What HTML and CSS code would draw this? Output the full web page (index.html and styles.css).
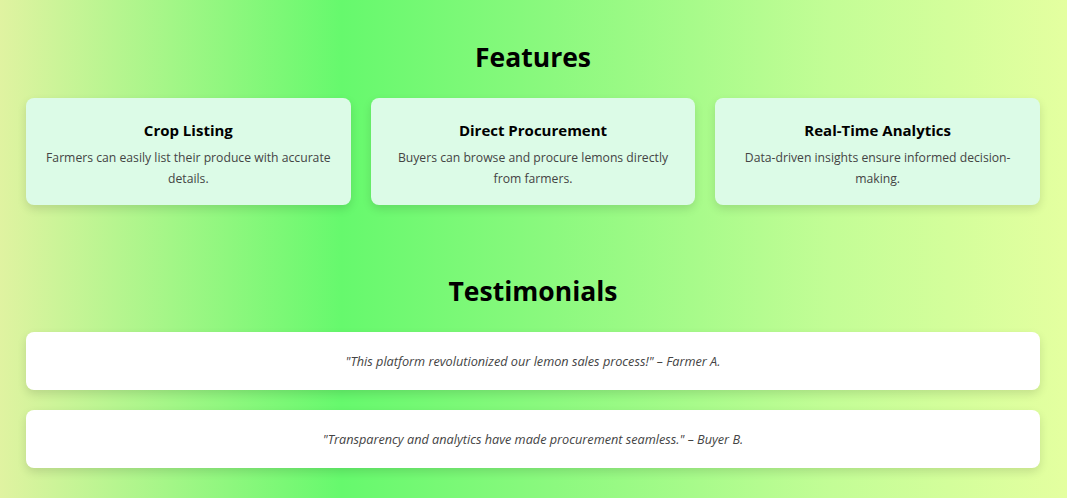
FILE: index.html
```html
<!DOCTYPE html>
<html lang="en">
<head>
<meta charset="utf-8">
<title>Lemon Platform</title>
<link rel="stylesheet" href="styles.css">
</head>
<body>
<section class="section features">
  <h2 class="section-title">Features</h2>
  <div class="feature-grid">
    <div class="feature-card">
      <h3 class="feature-title">Crop Listing</h3>
      <p class="feature-text">Farmers can easily list their produce with accurate details.</p>
    </div>
    <div class="feature-card">
      <h3 class="feature-title">Direct Procurement</h3>
      <p class="feature-text">Buyers can browse and procure lemons directly from farmers.</p>
    </div>
    <div class="feature-card">
      <h3 class="feature-title">Real-Time Analytics</h3>
      <p class="feature-text">Data-driven insights ensure informed decision-making.</p>
    </div>
  </div>
</section>
<section class="section testimonials">
  <h2 class="section-title">Testimonials</h2>
  <div class="testimonial-list">
    <div class="testimonial-card">
      <p class="testimonial-text">"This platform revolutionized our lemon sales process!" – Farmer A.</p>
    </div>
    <div class="testimonial-card">
      <p class="testimonial-text">"Transparency and analytics have made procurement seamless." – Buyer B.</p>
    </div>
  </div>
</section>
</body>
</html>
```
FILE: styles.css
```css
html, body {
  margin: 0;
  padding: 0;
}
body {
  min-height: 100vh;
  font-family: "Open Sans", "Noto Sans", sans-serif;
  background: linear-gradient(90deg, #e0f3a1 0%, #66f96d 32%, #8cf97f 52%, #c3fd96 78%, #e4ffa0 100%);
  color: #000;
}
.section {
  padding: 0 27px 0 26px;
}
.features {
  padding-top: 38px;
}
.testimonials {
  padding-top: 67px;
  padding-bottom: 30px;
}
.section-title {
  margin: 0 0 22px;
  text-align: center;
  font-size: 26.5px;
  font-weight: 700;
  line-height: 38px;
}
.feature-grid {
  display: grid;
  grid-template-columns: repeat(3, 1fr);
  gap: 20px;
}
.feature-card {
  background: #dcfbe7;
  border-radius: 8px;
  box-shadow: 0 4px 10px rgba(0, 0, 0, 0.12);
  padding: 22px 16px 16px;
  text-align: center;
}
.feature-title {
  margin: 0 0 7px;
  font-size: 15px;
  font-weight: 700;
  line-height: 20px;
}
.feature-text {
  margin: 0;
  font-size: 12.2px;
  line-height: 21px;
  color: #444;
}
.testimonial-list {
  display: flex;
  flex-direction: column;
  gap: 20px;
}
.testimonial-card {
  background: #fff;
  border-radius: 8px;
  box-shadow: 0 4px 10px rgba(0, 0, 0, 0.12);
  height: 58px;
  display: flex;
  align-items: center;
  justify-content: center;
}
.testimonial-text {
  margin: 0;
  font-size: 12.7px;
  font-style: italic;
  color: #444;
}
```
